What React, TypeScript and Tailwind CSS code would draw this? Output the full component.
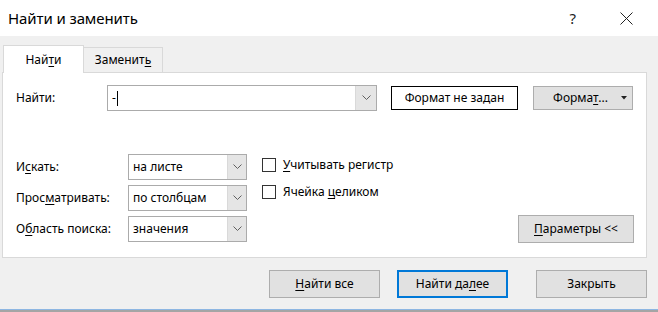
import React from "react";

const font = { fontFamily: '"Noto Sans", "Segoe UI", Arial, sans-serif' };

function Chevron() {
  return (
    <svg width="9" height="6" viewBox="0 0 9 6" className="text-[#606060]">
      <polyline points="0.5,0.5 4.5,4.5 8.5,0.5" fill="none" stroke="currentColor" strokeWidth="1" />
    </svg>
  );
}

function Select({ value, className = "" }: { value: string; className?: string }) {
  return (
    <div className={`flex h-[26px] w-[119px] border border-[#ababab] bg-white ${className}`}>
      <div className="flex flex-1 items-center pl-[4px] text-[12px] text-black">{value}</div>
      <div className="flex w-[19px] items-center justify-center border-l border-[#d9d9d9] bg-[#e5e5e5]">
        <Chevron />
      </div>
    </div>
  );
}

function Check({ children }: { children: React.ReactNode }) {
  return (
    <div className="flex h-[14px] items-center gap-[7px] text-[12px]">
      <span className="block h-[14px] w-[14px] border border-[#333333] bg-white" />
      <span>{children}</span>
    </div>
  );
}

function Btn({ children, primary = false }: { children: React.ReactNode; primary?: boolean }) {
  return (
    <button
      className={`flex h-[28px] w-[111px] items-center justify-center bg-[#e1e1e1] text-[12px] text-black ${
        primary ? "border-2 border-[#0078d7]" : "border border-[#adadad]"
      }`}
    >
      {children}
    </button>
  );
}

export default function App() {
  return (
    <div style={font} className="flex h-[312px] w-[658px] flex-col overflow-hidden bg-[#f0f0f0] text-black">
      {/* Title bar */}
      <div className="flex h-[36px] shrink-0 items-center bg-white">
        <span className="pl-[8px] text-[15px] tracking-[-0.1px]">Найти и заменить</span>
        <span className="ml-auto mr-[44px] text-[15px] text-[#222]">?</span>
        <svg width="13" height="13" viewBox="0 0 13 13" className="mr-[25px]">
          <path d="M0.5 0.5 L12.5 12.5 M12.5 0.5 L0.5 12.5" stroke="#222" strokeWidth="1" />
        </svg>
      </div>

      {/* Tabs */}
      <div className="mt-[9px] flex items-end pl-[3px]">
        <div className="relative z-10 -mb-px flex h-[28px] w-[81px] items-center justify-center border border-b-0 border-[#d9d9d9] bg-white text-[12px]">
          Най<span className="underline underline-offset-2">т</span>и
        </div>
        <div className="flex h-[25px] w-[79px] items-center justify-center border border-b-0 border-l-0 border-[#d9d9d9] bg-[#f0f0f0] text-[12px]">
          Заменит<span className="underline underline-offset-2">ь</span>
        </div>
      </div>

      {/* Panel */}
      <div className="ml-[2px] flex h-[186px] w-[645px] shrink-0 flex-col border border-[#d9d9d9] bg-white pl-[13px] pr-[12px] pt-[12px]">
        <div className="flex items-center">
          <span className="w-[91px] text-[12px]">Найти:</span>
          <div className="flex h-[26px] w-[270px] border border-[#ababab] bg-white">
            <div className="flex flex-1 items-center pl-[4px] text-[12px]">
              -<span className="ml-[1px] block h-[15px] w-[1px] bg-black" />
            </div>
            <div className="flex w-[21px] items-center justify-center border-l border-[#d9d9d9] bg-[#e5e5e5]">
              <Chevron />
            </div>
          </div>
          <div className="ml-[14px] flex h-[24px] w-[127px] items-center justify-center border border-black bg-white text-[12px]">
            Формат не задан
          </div>
          <div className="ml-[15px] flex h-[24px] w-[100px] items-center border border-[#adadad] bg-[#e1e1e1] text-[12px]">
            <span className="flex-1 pl-[6px] text-center">
              Форма<span className="underline underline-offset-2">т</span>...
            </span>
            <svg width="6" height="4" viewBox="0 0 6 4" className="mr-[5px]">
              <polygon points="0,0 6,0 3,3.5" fill="#222" />
            </svg>
          </div>
        </div>

        <div className="mt-[43px] flex items-end">
          <div className="grid grid-cols-[112px_119px] gap-y-[5px] text-[12px]">
            <span className="self-center">
              И<span className="underline underline-offset-2">с</span>кать:
            </span>
            <Select value="на листе" />
            <span className="self-center">
              Прос<span className="underline underline-offset-2">м</span>атривать:
            </span>
            <Select value="по столбцам" />
            <span className="self-center">
              О<span className="underline underline-offset-2">б</span>ласть поиска:
            </span>
            <Select value="значения" />
          </div>
          <div className="ml-[15px] flex flex-col gap-[13px] self-start pt-[4px]">
            <Check>
              <span className="underline underline-offset-2">У</span>читывать регистр
            </Check>
            <Check>
              Ячейка <span className="underline underline-offset-2">ц</span>еликом
            </Check>
          </div>
          <button className="ml-auto mb-[-1px] flex h-[28px] w-[116px] items-center justify-center border border-[#adadad] bg-[#e1e1e1] text-[12px]">
            <span className="underline underline-offset-2">П</span>араметры &lt;&lt;
          </button>
        </div>
      </div>

      {/* Bottom buttons */}
      <div className="mt-[12px] flex pl-[269px]">
        <Btn>
          <span className="underline underline-offset-2">Н</span>айти все
        </Btn>
        <div className="ml-[17px]">
          <Btn primary>
            Найти да<span className="underline underline-offset-2">л</span>ее
          </Btn>
        </div>
        <div className="ml-[28px]">
          <Btn>Закрыть</Btn>
        </div>
      </div>

      <div className="mt-auto h-[3px] shrink-0 border-t border-[#8db6e2] bg-[#a5a5a5]" />
    </div>
  );
}
